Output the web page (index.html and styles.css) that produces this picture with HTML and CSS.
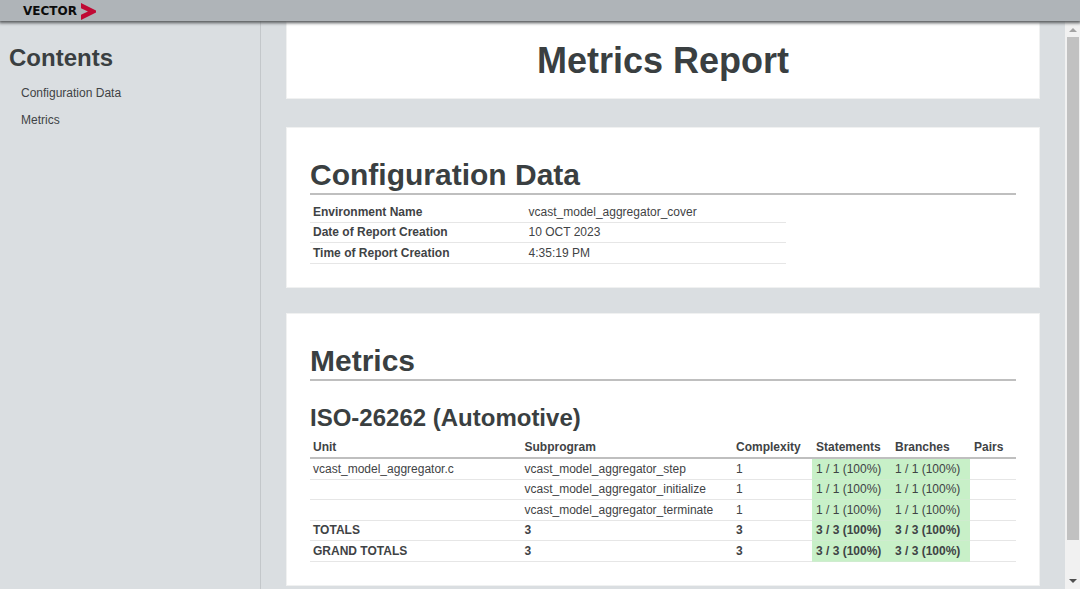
FILE: index.html
```html
<!DOCTYPE html>
<html lang="en">
<head>
<meta charset="utf-8">
<title>Metrics Report</title>
<link rel="stylesheet" href="styles.css">
</head>
<body>
<header class="topbar">
  <span class="wordmark">VECTOR</span>
  <svg class="chevron" viewBox="0 0 15 17" aria-hidden="true"><path d="M0 0 15 7.500V9.500L0 17V11.800L7 8.500 0 5.200Z"/></svg>
</header>
<div class="layout">
  <nav class="sidebar" aria-labelledby="contents">
    <h2 class="sidebar-title" id="contents">Contents</h2>
    <ul class="toc">
      <li><a href="#configuration">Configuration Data</a></li>
      <li><a href="#metrics">Metrics</a></li>
    </ul>
  </nav>
  <main class="report">
    <section class="panel panel-title">
      <h1 class="report-title">Metrics Report</h1>
    </section>
    <section class="panel panel-config" id="configuration">
      <h2 class="panel-heading">Configuration Data</h2>
      <table class="data config-table">
        <tbody>
          <tr><th scope="row">Environment Name</th><td>vcast_model_aggregator_cover</td></tr>
          <tr><th scope="row">Date of Report Creation</th><td>10 OCT 2023</td></tr>
          <tr><th scope="row">Time of Report Creation</th><td>4:35:19 PM</td></tr>
        </tbody>
      </table>
    </section>
    <section class="panel" id="metrics">
      <h2 class="panel-heading">Metrics</h2>
      <h3 class="sub-heading">ISO-26262 (Automotive)</h3>
      <table class="data metrics-table">
        <colgroup><col><col><col class="col-num"><col class="col-num"><col class="col-num"><col class="col-pairs"></colgroup>
        <thead>
          <tr><th scope="col">Unit</th><th scope="col">Subprogram</th><th scope="col">Complexity</th><th scope="col" class="cov">Statements</th><th scope="col" class="cov">Branches</th><th scope="col" class="cov">Pairs</th></tr>
        </thead>
        <tbody>
          <tr><td>vcast_model_aggregator.c</td><td>vcast_model_aggregator_step</td><td>1</td><td class="cov full">1 / 1 (100%)</td><td class="cov full">1 / 1 (100%)</td><td></td></tr>
          <tr><td></td><td>vcast_model_aggregator_initialize</td><td>1</td><td class="cov full">1 / 1 (100%)</td><td class="cov full">1 / 1 (100%)</td><td></td></tr>
          <tr><td></td><td>vcast_model_aggregator_terminate</td><td>1</td><td class="cov full">1 / 1 (100%)</td><td class="cov full">1 / 1 (100%)</td><td></td></tr>
          <tr class="total"><th scope="row">TOTALS</th><td>3</td><td>3</td><td class="cov full">3 / 3 (100%)</td><td class="cov full">3 / 3 (100%)</td><td></td></tr>
          <tr class="total"><th scope="row">GRAND TOTALS</th><td>3</td><td>3</td><td class="cov full">3 / 3 (100%)</td><td class="cov full">3 / 3 (100%)</td><td></td></tr>
        </tbody>
      </table>
    </section>
  </main>
  <div class="scrollbar" aria-hidden="true">
    <svg class="arrow arrow-up" viewBox="0 0 8 4"><path d="M4 0 8 4H0Z"/></svg>
    <div class="thumb"></div>
    <div class="track-rest"></div>
    <svg class="arrow arrow-down" viewBox="0 0 8 4"><path d="M0 0H8L4 4Z"/></svg>
  </div>
</div>
</body>
</html>
```
FILE: styles.css
```css
* { box-sizing: border-box; }

body {
  display: flex;
  flex-direction: column;
  height: 100vh;
  margin: 0;
  overflow: hidden;
  background: #dadee1;
  color: #3f4345;
  font-family: "Liberation Sans", Arial, sans-serif;
  font-size: 12px;
  line-height: 20px;
}

h1, h2, h3 { margin: 0; color: #3a3f41; }

.topbar {
  position: relative;
  z-index: 1;
  display: flex;
  flex: none;
  align-items: center;
  gap: 4px;
  height: 21px;
  padding-left: 23px;
  background: #afb4b8;
  box-shadow: 0 1px 3px 1px #55585a;
}

.wordmark {
  color: #0c0c0c;
  font: bold 12px/20px "DejaVu Sans", sans-serif;
}

.chevron { width: 15px; height: 17px; margin-top: 1px; fill: #c00a35; }

.layout { display: flex; flex: 1; min-height: 0; }

.sidebar {
  flex: none;
  width: 261px;
  padding: 22px 9px;
  border-right: 1px solid #c3c7ca;
}

.sidebar-title { font-size: 24px; line-height: 30px; }

.toc { margin: 10px 0 0; padding: 0 0 0 12px; list-style: none; }
.toc li { margin-bottom: 7px; }
.toc a { color: inherit; text-decoration: none; }

.report { flex: 1; min-width: 0; padding: 0 25px; overflow: hidden; }

.panel {
  margin-bottom: 25px;
  padding: 29px 23px 23px;
  border: 1px solid #f0f1f1;
  background: #fff;
}

.panel-title { margin-bottom: 28px; padding: 17px 23px 15px; }
.report-title { font-size: 36px; line-height: 44px; text-align: center; }

.panel-heading {
  font-size: 30px;
  line-height: 36px;
  border-bottom: 2px solid #bfbfbf;
}

.sub-heading { margin-top: 23px; font-size: 24px; line-height: 28px; }

.data { border-collapse: separate; border-spacing: 0; table-layout: fixed; }
.data th, .data td {
  height: 20px;
  padding: 0 3px;
  border-bottom: 1px solid #e6e6e6;
  line-height: 19px;
  text-align: left;
  white-space: nowrap;
}
.data tbody tr:nth-child(odd) > * { height: 21px; }

.config-table { width: 67.4%; margin-top: 7px; }
.config-table th { width: 45.3%; }

.metrics-table { width: 100%; margin-top: 5px; }
.metrics-table thead th { height: 22px; border-bottom: 2px solid #bfbfbf; }
.col-num { width: 79px; }
.col-pairs { width: 46px; }
.data .cov { padding-left: 4px; padding-right: 0; }
.data .full { background: #c8f0c8; border-bottom-color: #cfeccf; }
.total td { font-weight: bold; }

.scrollbar {
  display: flex;
  flex: none;
  flex-direction: column;
  align-items: center;
  width: 15px;
  padding: 7px 0 6px;
  background: #f1f1f1;
}
.arrow { flex: none; width: 8px; height: 4px; }
.arrow-up { margin-bottom: 5px; fill: #a3a3a3; }
.arrow-down { fill: #505050; }
.thumb { flex: 13; width: 12px; background: #c1c1c1; }
.track-rest { flex: 1; }
```
